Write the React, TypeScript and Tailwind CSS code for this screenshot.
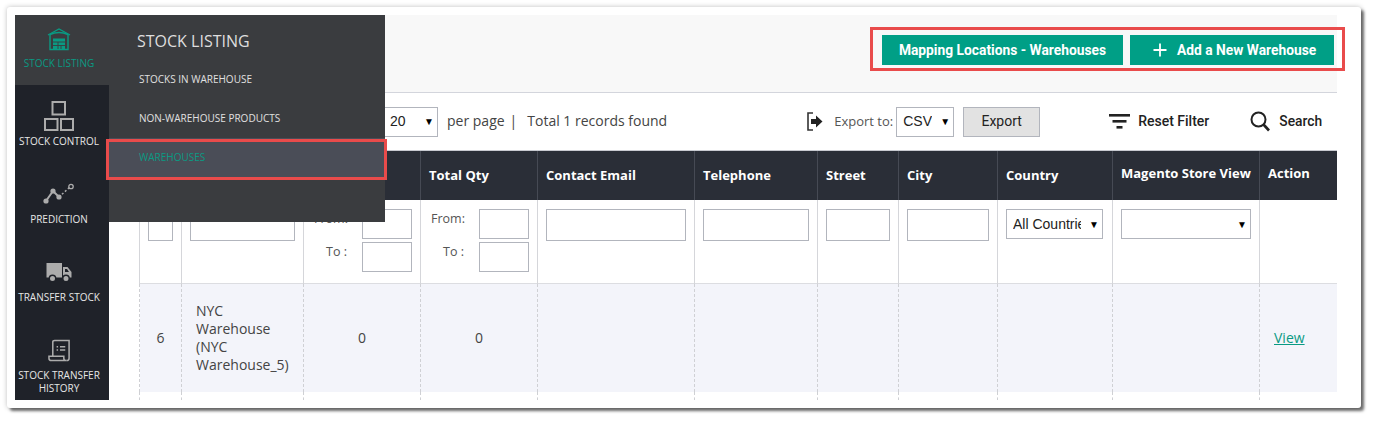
import React from "react";

const cols = [42, 122, 117, 117, 157, 123, 81, 99, 115, 147, 78];

function WarehouseIcon() {
  return (
    <svg width="24" height="24" viewBox="0 0 24 24" fill="none" stroke="#0a9a83" strokeWidth="1.4">
      <path d="M1 8 L12 2 L23 8" />
      <path d="M3 7.5 V22.5 H21 V7.5" />
      <path d="M3 7.5 Q12 3.5 21 7.5" />
      <path d="M6 11.5 H18 V22 H6 Z" fill="#0a9a83" stroke="none" />
      <path d="M6 15 H18 M6 18.5 H18 M11 15 V22 M14 18.5 V22" stroke="#3a3c3f" strokeWidth="0.9" />
    </svg>
  );
}
function BlocksIcon() {
  return (
    <svg width="30" height="30" viewBox="0 0 30 30" fill="none" stroke="#acacac" strokeWidth="2">
      <rect x="8.5" y="1" width="12.5" height="12.5" />
      <rect x="1" y="18" width="12.5" height="11" />
      <rect x="17" y="18" width="12" height="11" />
    </svg>
  );
}
function PredictionIcon() {
  return (
    <svg width="32" height="22" viewBox="0 0 32 22" fill="none">
      <path d="M3 18 L10 8 L16 14" stroke="#acacac" strokeWidth="2" />
      <path d="M16 14 L27 4" stroke="#acacac" strokeWidth="1.5" strokeDasharray="2 2" />
      <circle cx="3" cy="18" r="2.6" fill="#acacac" />
      <circle cx="10" cy="8" r="2.6" fill="#acacac" />
      <circle cx="16" cy="14" r="2.6" fill="#acacac" />
      <circle cx="28" cy="3.5" r="2.2" stroke="#acacac" strokeWidth="1.3" />
    </svg>
  );
}
function TruckIcon() {
  return (
    <svg width="26" height="21" viewBox="0 0 26 21" fill="#acacac">
      <path d="M0.5 1 H16 V15.5 H0.5 Z" />
      <path d="M17 5 H21.5 L25.5 10 V15.5 H17 Z" />
      <path d="M19 7 H21 L23 10 H19 Z" fill="#1f2229" />
      <circle cx="6.5" cy="16.5" r="3.2" stroke="#1f2229" strokeWidth="1.4" />
      <circle cx="20" cy="16.5" r="3.2" stroke="#1f2229" strokeWidth="1.4" />
    </svg>
  );
}
function HistoryIcon() {
  return (
    <svg width="23" height="23" viewBox="0 0 24 24" fill="none" stroke="#acacac" strokeWidth="1.6">
      <path d="M5 18 V3 Q5 1.5 7 1.5 H22 V20 Q22 22.5 19.5 22.5" />
      <path d="M19.5 22.5 H3.5 Q1 22.5 1 20 V18 H16.5 V20 Q16.5 22.5 19 22.5" />
      <path d="M9 8 H10.5 M12.5 8 H18 M9 11.5 H10.5 M12.5 11.5 H18" strokeWidth="1.5" />
    </svg>
  );
}

function NavItem({ icon, label, first }: { icon: React.ReactNode; label: React.ReactNode; first?: boolean }) {
  return (
    <div
      className={
        (first ? "h-[70px] pt-[8px] bg-[#3a3c3f] text-[#0a9a83] " : "h-[78px] pt-[13px] text-[#e6e6e6] ") +
        "flex flex-col items-center text-center pr-[6px]"
      }
    >
      <div className={(first ? "h-[32px] " : "h-[36px] ") + "flex items-center justify-center"}>{icon}</div>
      <div className={(first ? "mt-[2px] " : "mt-[1px] ") + "text-[10px] leading-[13px] uppercase whitespace-nowrap"}>{label}</div>
    </div>
  );
}

function Select({ className, text }: { className: string; text: string }) {
  return (
    <div className={"flex items-center justify-between bg-white border border-[#b2b5bd] font-['Liberation_Sans',sans-serif] text-[14px] text-[#222] pr-[3px] overflow-hidden " + className}>
      <span className="whitespace-nowrap overflow-hidden min-w-0">{text}</span>
      <span className="text-[10px] ml-[8px] text-black shrink-0">▼</span>
    </div>
  );
}

const inputCls = "block border border-[#b2b5bd] bg-white";

function RangeFilter() {
  return (
    <div className="text-[12.5px] leading-[16px] text-[#555]">
      <div className="flex justify-between h-[30px] pl-[2px]">
        <span className="pt-[2px]">From:</span>
        <div className={inputCls + " w-[50px] h-[30px]"} />
      </div>
      <div className="flex justify-between h-[30px] mt-[3px] pl-[14px]">
        <span className="pt-[2px]">To :</span>
        <div className={inputCls + " w-[50px] h-[30px]"} />
      </div>
    </div>
  );
}

const th = "border-l border-[#464a54] px-[8px] text-left font-bold text-[13px] text-white align-middle";
const fd = "border-l border-[#d5d6da] px-[8px] pt-[9px] align-top";
const dd = "border-l border-dashed border-[#cfd0d4] text-center text-[14px] text-[#444] align-middle";

export default function App() {
  return (
    <div className="w-[1373px] h-[421px] bg-white pt-[7px] pl-[7px] font-['Open_Sans',sans-serif] overflow-hidden">
      <div className="relative w-[1354px] h-[401px] bg-white rounded-[3px] p-[8px] shadow-[3px_3px_3px_rgba(0,0,0,0.55),0_0_5px_rgba(0,0,0,0.25)]">
        <div className="relative flex w-[1322px] h-[385px] overflow-hidden">
          <aside className="w-[94px] shrink-0 bg-[#1f2229] h-full">
            <NavItem first icon={<WarehouseIcon />} label="Stock Listing" />
            <NavItem icon={<BlocksIcon />} label="Stock Control" />
            <NavItem icon={<PredictionIcon />} label="Prediction" />
            <NavItem icon={<TruckIcon />} label="Transfer Stock" />
            <NavItem icon={<HistoryIcon />} label={<>Stock Transfer<br />History</>} />
          </aside>

          <main className="flex-1 min-w-0 flex flex-col">
            <div className="h-[78px] shrink-0 bg-[#f8f8f8] border-b border-[#d3d5dc] flex justify-end items-start pt-[20px] pr-[3px] gap-[7px] font-['Roboto',sans-serif]">
              <button className="w-[241px] h-[30px] bg-[#009f86] text-white font-bold text-[13.8px]">Mapping Locations - Warehouses</button>
              <button className="w-[204px] h-[30px] bg-[#009f86] text-white font-bold text-[13.8px] flex items-center justify-start pl-[23px] gap-[10px]">
                <svg width="14" height="14" viewBox="0 0 14 14" stroke="white" strokeWidth="1.8"><path d="M7 0.5 V13.5 M0.5 7 H13.5" /></svg>
                Add a New Warehouse
              </button>
            </div>

            <div className="h-[57px] shrink-0 pl-[230px] flex items-center">
              <Select className="w-[99px] h-[30px] pl-[50px]" text="20" />
              <span className="ml-[9px] text-[14px] text-[#444] -mt-[3px]">per page</span>
              <span className="ml-[5px] text-[14px] text-[#444] -mt-[3px]">|</span>
              <span className="ml-[10px] text-[14px] text-[#444] -mt-[3px]">Total 1 records found</span>
              <svg className="ml-[140px] mr-[11px] -mt-[1px]" width="16" height="19" viewBox="0 0 16 19" fill="none">
                <path d="M6 1 H1 V18 H6" stroke="#333" strokeWidth="1.6" />
                <path d="M4 7 H9 V3.5 L15.5 9.5 L9 15.5 V12 H4 Z" fill="#222" />
              </svg>
              <span className="text-[13px] text-[#555] whitespace-nowrap">Export to:</span>
              <Select className="w-[58px] h-[30px] ml-[3px] pl-[6px]" text="CSV" />
              <button className="ml-[9px] w-[77px] h-[30px] bg-[#e2e2e2] border border-[#b2b5bd] text-[14px] font-['Roboto',sans-serif] text-[#222]">Export</button>
              <svg className="ml-[69px] mr-[8px]" width="21" height="17" viewBox="0 0 21 17" fill="#222">
                <rect x="0" y="1" width="21" height="2.6" />
                <rect x="3.5" y="7" width="14" height="2.6" />
                <rect x="7.5" y="13" width="6" height="2.6" />
              </svg>
              <span className="text-[14px] font-['Roboto',sans-serif] font-medium text-[#222] whitespace-nowrap">Reset Filter</span>
              <svg className="ml-[41px] mr-[9px]" width="20" height="21" viewBox="0 0 20 21" fill="none" stroke="#222" strokeWidth="2">
                <circle cx="8.5" cy="8.5" r="7" />
                <path d="M13.5 13.5 L19 19.5" strokeWidth="2.6" />
              </svg>
              <span className="text-[13.8px] font-['Roboto',sans-serif] font-medium text-[#222]">Search</span>
            </div>

            <div className="ml-[30px] w-[1198px] border-t border-[#c8cad0]">
              <table className="table-fixed border-collapse w-[1198px]">
                <colgroup>
                  {cols.map((w, i) => <col key={i} style={{ width: w }} />)}
                </colgroup>
                <thead>
                  <tr className="h-[49px] bg-[#2a2e37]">
                    <th className={th}>ID</th>
                    <th className={th}>Warehouse</th>
                    <th className={th}>Avail. Qty</th>
                    <th className={th}>Total Qty</th>
                    <th className={th}>Contact Email</th>
                    <th className={th}>Telephone</th>
                    <th className={th}>Street</th>
                    <th className={th}>City</th>
                    <th className={th}>Country</th>
                    <th className={th + " pb-[4px] whitespace-nowrap"}>Magento Store View</th>
                    <th className={th + " pb-[4px]"}>Action</th>
                  </tr>
                </thead>
                <tbody>
                  <tr className="h-[83px] border-b border-[#dcdde1]">
                    <td className={fd}><div className={inputCls + " w-[25px] h-[32px]"} /></td>
                    <td className={fd}><div className={inputCls + " w-[105px] h-[32px]"} /></td>
                    <td className={fd}><RangeFilter /></td>
                    <td className={fd}><RangeFilter /></td>
                    <td className={fd}><div className={inputCls + " w-[140px] h-[32px]"} /></td>
                    <td className={fd}><div className={inputCls + " w-[106px] h-[32px]"} /></td>
                    <td className={fd}><div className={inputCls + " w-[64px] h-[32px]"} /></td>
                    <td className={fd}><div className={inputCls + " w-[82px] h-[32px]"} /></td>
                    <td className={fd}><Select className="w-[97px] h-[30px] pl-[6px]" text="All Countries" /></td>
                    <td className={fd}><Select className="w-[130px] h-[30px] pl-[6px]" text="" /></td>
                    <td className={fd + " border-r"} />
                  </tr>
                  <tr className="h-[109px] bg-[#f3f4fa]">
                    <td className={dd}>6</td>
                    <td className={dd + " text-left pl-[14px] leading-[18px]"}>NYC<br />Warehouse<br />(NYC<br />Warehouse_5)</td>
                    <td className={dd}>0</td>
                    <td className={dd}>0</td>
                    <td className={dd} />
                    <td className={dd} />
                    <td className={dd} />
                    <td className={dd} />
                    <td className={dd} />
                    <td className={dd} />
                    <td className={dd + " border-r text-left pl-[14px]"}>
                      <a className="text-[#0a9a83] underline">View</a>
                    </td>
                  </tr>
                  <tr className="h-[30px]">
                    {cols.map((_, i) => <td key={i} className={"border-l border-dashed border-[#cfd0d4]" + (i === 10 ? " border-r" : "")} />)}
                  </tr>
                </tbody>
              </table>
            </div>
          </main>

          <div className="absolute left-[94px] top-0 w-[276px] h-[207px] bg-[#3a3c3f] text-[#e0e0e0]">
            <div className="pl-[28px] pt-[15px] h-[45px] text-[16px] leading-[22px] text-[#dedede]">STOCK LISTING</div>
            <div className="h-[39px] flex items-center pl-[30px] text-[10px] uppercase">Stocks in Warehouse</div>
            <div className="h-[39px] flex items-center pl-[30px] text-[10px] uppercase">Non-Warehouse Products</div>
            <div className="h-[39px] flex items-center pl-[30px] text-[10px] uppercase bg-[#4a4d57] text-[#0a9a83]">Warehouses</div>
          </div>
        </div>
        <div className="absolute left-[99px] top-[132px] w-[281px] h-[41px] border-[3px] border-[#e94b4b]" />
        <div className="absolute left-[863px] top-[20px] w-[475px] h-[44px] border-[3px] border-[#e94b4b]" />
      </div>
    </div>
  );
}
